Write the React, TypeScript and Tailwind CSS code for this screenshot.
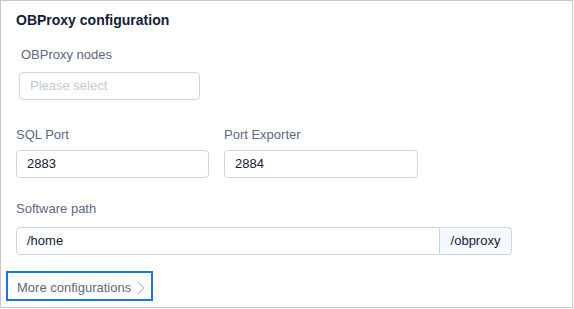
import { ChevronRight } from 'lucide-react'

function Label({ children, className = '' }: { children: string; className?: string }) {
  return <div className={`text-[13px] leading-[18px] text-[#5c6784] ${className}`}>{children}</div>
}

function Field({ value, className = '' }: { value: string; className?: string }) {
  return (
    <div
      className={`flex h-[28px] items-center rounded-[4px] border border-[#cdd5e4] bg-white px-[10px] text-[13px] text-[#132039] ${className}`}
    >
      {value}
    </div>
  )
}

export default function App() {
  return (
    <div className="h-[309px] w-[574px] bg-white font-['Liberation_Sans',sans-serif]">
      <div className="flex h-[308px] w-[573px] flex-col border border-[#c8c8c8] px-[15px] pt-[9px]">
        <div className="text-[14px] font-semibold leading-[20px] text-[#132039]">OBProxy configuration</div>

        <Label className="ml-[5px] mt-[16px]">OBProxy nodes</Label>
        <div className="ml-[3px] mt-[8px] flex h-[28px] w-[181px] items-center rounded-[4px] border border-[#cdd5e4] px-[10px] text-[13px] text-[#c1c8d6]">
          Please select
        </div>

        <div className="mt-[26px] flex gap-[15px]">
          <div className="flex w-[193px] flex-col">
            <Label>SQL Port</Label>
            <Field value="2883" className="mt-[6px]" />
          </div>
          <div className="flex w-[194px] flex-col">
            <Label>Port Exporter</Label>
            <Field value="2884" className="mt-[6px]" />
          </div>
        </div>

        <Label className="mt-[22px]">Software path</Label>
        <div className="mt-[9px] flex h-[28px] w-[496px] text-[13px] text-[#132039]">
          <div className="flex flex-1 items-center rounded-l-[4px] border border-[#cdd5e4] px-[10px]">/home</div>
          <div className="flex w-[72px] items-center justify-center rounded-r-[4px] border border-l-0 border-[#cdd5e4] bg-[#f5f8fe]">
            /obproxy
          </div>
        </div>

        <div className="-ml-[10px] mt-[16px] flex h-[30px] w-[147px] items-center whitespace-nowrap border-2 border-[#1a73e8] pl-[9px] pt-[3px] text-[13px] text-[#5c6784]">
          More configurations
          <ChevronRight className="-ml-[1px] h-[22px] w-[22px] shrink-0 text-[#8592ad]" strokeWidth={1} />
        </div>
      </div>
    </div>
  )
}
